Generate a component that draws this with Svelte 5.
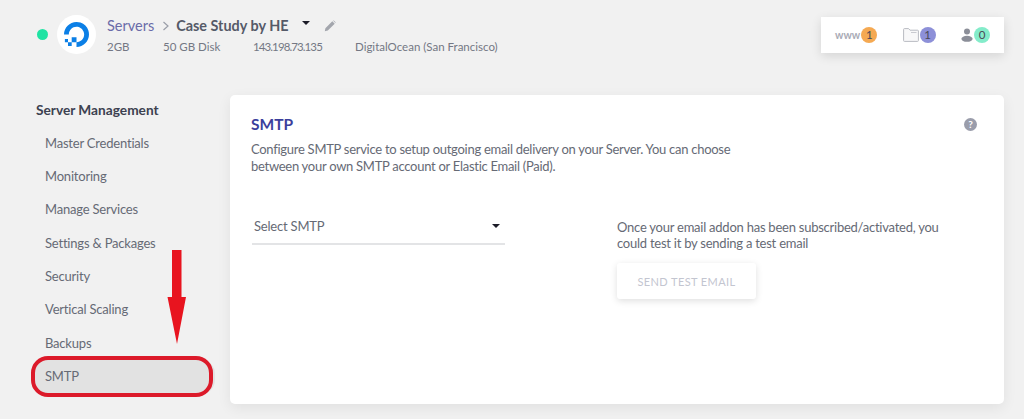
<script>
	const items = [
		'Master Credentials',
		'Monitoring',
		'Manage Services',
		'Settings & Packages',
		'Security',
		'Vertical Scaling',
		'Backups',
		'SMTP'
	];
</script>

<div class="page">
	<header class="top">
		<div class="server">
			<span class="dot"></span>
			<span class="logo">
				<svg viewBox="0 0 24 24" width="25" height="25">
					<path d="M12.04 0C5.408-.02.005 5.37.005 11.992h4.638c0-4.923 4.882-8.731 10.064-6.855a6.95 6.95 0 014.147 4.148c1.889 5.177-1.924 10.055-6.84 10.064v-4.61H7.391v4.623h4.61V24c7.86 0 13.967-7.588 11.397-15.83-1.115-3.59-3.985-6.446-7.575-7.575A12.8 12.8 0 0012.039 0zM7.39 19.362H3.828v3.564H7.39zm-3.563 0v-2.978H.85v2.978z" fill="#0b7fe6" />
				</svg>
			</span>
			<div class="info">
				<div class="crumbs">
					<span class="servers">Servers</span>
					<svg class="chev" viewBox="0 0 8 10" width="8" height="10"><path d="M1.5 1l4.5 4-4.5 4" fill="none" stroke="#9a9ea8" stroke-width="1.2" /></svg>
					<span class="name">Case Study by HE</span>
					<span class="caret"></span>
					<svg class="pencil" viewBox="0 0 12 12" width="12" height="12"><path d="M0.8 11.2l.6-3L8.3 1.3l2.4 2.4-6.9 6.9z M9 .6l.8-.2 1.8 1.8-.2.8z" fill="#a3a6ad" /></svg>
				</div>
				<div class="meta">
					<span class="m1">2GB</span>
					<span class="m2">50 GB Disk</span>
					<span class="m3">143.198.73.135</span>
					<span>DigitalOcean (San Francisco)</span>
				</div>
			</div>
		</div>
		<div class="stats">
			<div class="stat">
				<span class="www">www</span>
				<span class="badge orange">1</span>
			</div>
			<div class="stat">
				<svg viewBox="0 0 16 14" width="16" height="14"><path d="M.6 12.6V1.4q0-.8.8-.8h4.2l1.4 1.600h7.600q.8 0 .8.8v9.600q0 .8-.8.8H1.400q-.8 0-.8-.8z" fill="#f8f8f9" stroke="#b9bbc2" stroke-width="1" /><path d="M8 4.500h5.500" stroke="#c9cad0" stroke-width="1" /></svg>
				<span class="badge purple">1</span>
			</div>
			<div class="stat">
				<svg viewBox="0 0 12 14" width="12" height="14"><circle cx="6" cy="3.400" r="3" fill="#8b8e98" /><ellipse cx="6" cy="10.800" rx="5.600" ry="3" fill="#8b8e98" /></svg>
				<span class="badge green">0</span>
			</div>
		</div>
	</header>

	<div class="body">
		<aside class="side">
			<h2>Server Management</h2>
			<ul>
				{#each items as item}
					<li class:active={item === 'SMTP'}>{item}</li>
				{/each}
			</ul>
		</aside>

		<main class="card">
			<div class="card-head">
				<div>
					<h1>SMTP</h1>
					<p class="lead">Configure SMTP service to setup outgoing email delivery on your Server. You can choose between your own SMTP account or Elastic Email (Paid).</p>
				</div>
				<span class="help">?</span>
			</div>
			<div class="columns">
				<div class="select">
					<span>Select SMTP</span>
					<span class="caret small"></span>
				</div>
				<div class="test">
					<p>Once your email addon has been subscribed/activated, you could test it by sending a test email</p>
					<button type="button">SEND TEST EMAIL</button>
				</div>
			</div>
		</main>
	</div>

	<svg class="arrow" viewBox="0 0 20 94" width="20" height="94">
		<path d="M5 0h9.500v47H19L10 94 .5 47H5z" fill="#e8141f" />
	</svg>
	<div class="oval"></div>
</div>

<style>
	:global(body) {
		margin: 0;
		background: #f1f1f1;
	}

	.page {
		position: relative;
		width: 1024px;
		height: 419px;
		overflow: hidden;
		background: #f1f1f1;
		font-family: Lato, 'Liberation Sans', sans-serif;
		color: #666a75;
	}

	.top {
		display: flex;
		justify-content: space-between;
		align-items: flex-start;
		height: 95px;
		padding: 15px 20px 0 37px;
		box-sizing: border-box;
	}

	.server {
		display: flex;
		align-items: center;
	}

	.dot {
		width: 11px;
		height: 11px;
		border-radius: 50%;
		background: #1fe3a3;
		margin-right: 9px;
	}

	.logo {
		display: flex;
		align-items: center;
		justify-content: center;
		width: 39px;
		height: 39px;
		border-radius: 50%;
		background: #fff;
		margin-right: 11px;
	}

	.crumbs {
		display: flex;
		align-items: center;
		height: 18px;
	}

	.servers {
		font-size: 14.500px;
		color: #6a6ba8;
	}

	.chev {
		margin: 1px 6px 0 8px;
	}

	.name {
		font-size: 14.400px;
		font-weight: 700;
		color: #555a68;
	}

	.caret {
		width: 0;
		height: 0;
		border-left: 4px solid transparent;
		border-right: 4px solid transparent;
		border-top: 4.500px solid #1c1c28;
		margin: -5px 0 0 13px;
	}

	.pencil {
		margin-left: 14px;
	}

	.meta {
		display: flex;
		margin-top: 5px;
		font-size: 11.500px;
		color: #747884;
	}

	.m1 {
		width: 56px;
	}

	.m2 {
		width: 90px;
	}

	.m3 {
		width: 102px;
		letter-spacing: -0.9px;
	}

	.stats {
		display: flex;
		align-items: center;
		justify-content: space-between;
		width: 183px;
		height: 36px;
		margin-top: 2px;
		padding: 0 14px;
		box-sizing: border-box;
		background: #fff;
		box-shadow: 0 3px 10px rgba(0, 0, 0, 0.12);
	}

	.stat {
		display: flex;
		align-items: center;
		gap: 1px;
	}

	.www {
		font-size: 10.500px;
		font-weight: 700;
		color: #a9abb6;
	}

	.badge {
		width: 16px;
		height: 16px;
		border-radius: 50%;
		font-size: 11.500px;
		line-height: 16px;
		text-align: center;
		color: #4a4a55;
	}

	.orange {
		background: #f5a952;
	}

	.purple {
		background: #8d90d8;
	}

	.green {
		background: #84ecca;
	}

	.body {
		display: flex;
	}

	.side {
		width: 194px;
		flex: none;
		padding-left: 36px;
	}

	h2 {
		margin: 6px 0 0;
		font-size: 13.700px;
		line-height: 18px;
		font-weight: 700;
		color: #3c4150;
	}

	ul {
		list-style: none;
		margin: 7.500px 0 0 -4px;
		padding: 0;
	}

	li {
		height: 33.400px;
		line-height: 33.400px;
		padding-left: 13px;
		font-size: 13px;
		letter-spacing: -0.2px;
		color: #666a75;
	}

	li.active {
		width: 170px;
		background: #e2e2e2;
		border-radius: 14px;
	}

	.card {
		width: 774px;
		height: 309px;
		padding: 19px 21px;
		box-sizing: border-box;
		background: #fff;
		border-radius: 5px;
		box-shadow: 0 4px 14px rgba(0, 0, 0, 0.07);
	}

	.card-head {
		display: flex;
		justify-content: space-between;
		align-items: flex-start;
	}

	h1 {
		margin: 0;
		font-size: 15.500px;
		line-height: 20px;
		font-weight: 700;
		color: #3b3f9c;
	}

	.lead {
		width: 500px;
		margin: 7px 0 0;
		font-size: 13px;
		letter-spacing: -0.28px;
		line-height: 17px;
		color: #666a75;
	}

	.help {
		width: 13px;
		height: 13px;
		margin: 4px 6px 0 0;
		border-radius: 50%;
		background: #9a9dab;
		color: #fff;
		font-size: 10px;
		font-weight: 700;
		line-height: 13px;
		text-align: center;
	}

	.columns {
		display: flex;
		margin-top: 33px;
	}

	.select {
		display: flex;
		justify-content: space-between;
		align-items: center;
		width: 253px;
		height: 37px;
		margin: 0 0 0 1px;
		padding: 0 5px 0 2px;
		box-sizing: border-box;
		border-bottom: 2px solid #e3e4e6;
		font-size: 13px;
		letter-spacing: -0.2px;
		color: #666a75;
	}

	.caret.small {
		margin: 0;
		border-left-width: 4px;
		border-right-width: 4px;
		border-top-width: 4px;
	}

	.test {
		margin: 11px 0 0 112px;
		width: 340px;
	}

	.test p {
		margin: 0;
		font-size: 13px;
		letter-spacing: -0.24px;
		line-height: 16px;
		color: #666a75;
	}

	button {
		display: block;
		width: 139px;
		height: 36px;
		margin-top: 12px;
		border: 0;
		border-radius: 3px;
		background: #fff;
		box-shadow: 0 2px 7px rgba(0, 0, 0, 0.13);
		font-family: inherit;
		font-size: 11px;
		letter-spacing: 0.4px;
		color: #c3c5d0;
	}

	/* annotations drawn over the screenshot */
	.arrow {
		position: absolute;
		left: 167px;
		top: 250px;
	}

	.oval {
		position: absolute;
		left: 31px;
		top: 356px;
		width: 182px;
		height: 41px;
		box-sizing: border-box;
		border: 4px solid #dc1a2a;
		border-radius: 17px;
	}
</style>
